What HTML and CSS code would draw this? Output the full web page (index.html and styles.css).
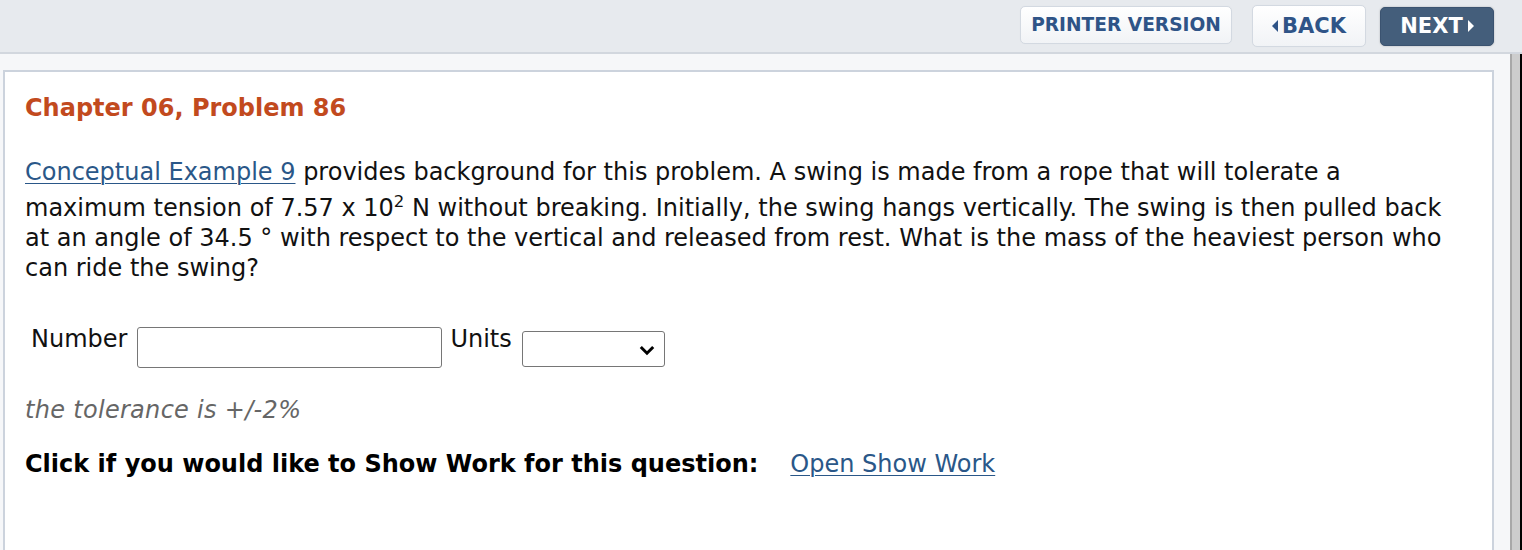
FILE: index.html
```html
<!DOCTYPE html>
<html>
<head>
<meta charset="utf-8">
<link rel="stylesheet" href="styles.css">
</head>
<body>
<div class="topbar">
  <a class="btn btn-light printer">PRINTER VERSION</a>
  <a class="btn btn-light big back"><span class="tri tri-left"></span>BACK</a>
  <a class="btn btn-dark big next">NEXT<span class="tri tri-right"></span></a>
</div>
<div class="frame">
  <div class="pane">
    <div class="card">
      <h1 class="title">Chapter 06, Problem 86</h1>
      <p class="question"><a class="link" href="#">Conceptual Example 9</a> provides background for this problem. A swing is made from a rope that will tolerate a<br>maximum tension of 7.57 x 10<sup>2</sup> N without breaking. Initially, the swing hangs vertically. The swing is then pulled back<br>at an angle of 34.5 ° with respect to the vertical and released from rest. What is the mass of the heaviest person who<br>can ride the swing?</p>
      <div class="answer">
        <span class="label">Number</span>
        <input class="num" type="text">
        <span class="label">Units</span>
        <span class="select"><svg class="chev" viewBox="0 0 16 11" width="16" height="11"><path d="M1.8 2 L8 8.2 L14.2 2" fill="none" stroke="#000" stroke-width="3"/></svg></span>
      </div>
      <p class="tolerance">the tolerance is +/-2%</p>
      <p class="showwork"><b>Click if you would like to Show Work for this question:</b><a class="link sw" href="#">Open Show Work</a></p>
    </div>
  </div>
  <div class="scrollbar"></div>
</div>
</body>
</html>
```

FILE: styles.css
```css
html, body { margin: 0; padding: 0; }
body {
  font-family: "DejaVu Sans", Verdana, sans-serif;
  background: #f6f7f9;
  height: 550px;
  overflow: hidden;
}
.topbar {
  height: 52px;
  background: #e7eaee;
  border-bottom: 2px solid #d2d7de;
  display: flex;
  align-items: center;
  justify-content: flex-end;
  padding-right: 28px;
}
.btn {
  display: flex;
  align-items: center;
  justify-content: center;
  box-sizing: border-box;
  font-weight: bold;
  font-size: 18.6px;
  text-decoration: none;
  border-radius: 5px;
}
.big { font-size: 21px; }
.btn-light {
  background: linear-gradient(#ffffff, #f1f3f6);
  border: 1px solid #d3d9e1;
  color: #2f5487;
  box-shadow: 0 0 1px rgba(0,0,0,0.05);
}
.printer { width: 212px; height: 38px; margin-right: 20px; margin-top: -3px; }
.back { width: 114px; height: 42px; margin-right: 14px; }
.btn-dark {
  background: #445e7b;
  border: 1px solid #3b5370;
  color: #fff;
  box-shadow: 0 0 2px rgba(0,0,0,0.25);
}
.next { width: 114px; height: 39px; }
.tri {
  display: inline-block;
  width: 0; height: 0;
  border-top: 6px solid transparent;
  border-bottom: 6px solid transparent;
}
.tri-left { border-right: 6px solid #2f5487; margin-right: 4px; }
.tri-right { border-left: 6px solid #fff; margin-left: 5px; }

.frame {
  display: flex;
  height: 496px;
}
.pane {
  flex: 1 1 auto;
  min-width: 0;
  padding: 16px 16px 0 3px;
}
.card {
  background: #fff;
  border: 2px solid #ccd3dd;
  border-bottom: none;
  height: 100%;
  box-sizing: border-box;
  padding: 20px 4px 0 20px;
}
.scrollbar {
  flex: 0 0 8px;
  background: #cdcdcd;
  border-left: 2px solid #a8a8a8;
  border-right: 2px solid #000;
}
.title {
  margin: 0;
  font-size: 24px;
  font-weight: bold;
  color: #c24a1e;
  line-height: 32px;
}
.question {
  margin: 33px 0 0 0;
  font-size: 24px;
  line-height: 30px;
  color: #111;
  white-space: nowrap;
}
.question sup { font-size: 16.5px; line-height: 1.8; vertical-align: 9px; }
.link { color: #2a5788; text-decoration: underline; text-underline-offset: 3px; text-decoration-thickness: 1px; }
.answer {
  display: flex;
  align-items: flex-start;
  margin-top: 44px;
  padding-left: 6px;
}
.label {
  font-size: 24px;
  color: #111;
  line-height: 24px;
  margin-top: 0;
}
.num {
  width: 305px;
  height: 41px;
  box-sizing: border-box;
  border: 1px solid #767676;
  border-radius: 3px;
  margin: 0 8px 0 10px;
  padding: 0;
}
.select {
  width: 143px;
  height: 36px;
  box-sizing: border-box;
  border: 1px solid #767676;
  border-radius: 3px;
  margin: 4px 0 0 10px;
  display: flex;
  align-items: center;
  justify-content: flex-end;
  padding-right: 9px;
  padding-top: 2px;
}
.tolerance {
  margin: 27px 0 0 0;
  font-size: 24px;
  font-style: italic;
  color: #666;
  line-height: 30px;
  letter-spacing: 0.3px;
}
.showwork {
  margin: 24px 0 0 0;
  font-size: 24px;
  line-height: 30px;
  color: #000;
}
.sw { margin-left: 32px; }
```
